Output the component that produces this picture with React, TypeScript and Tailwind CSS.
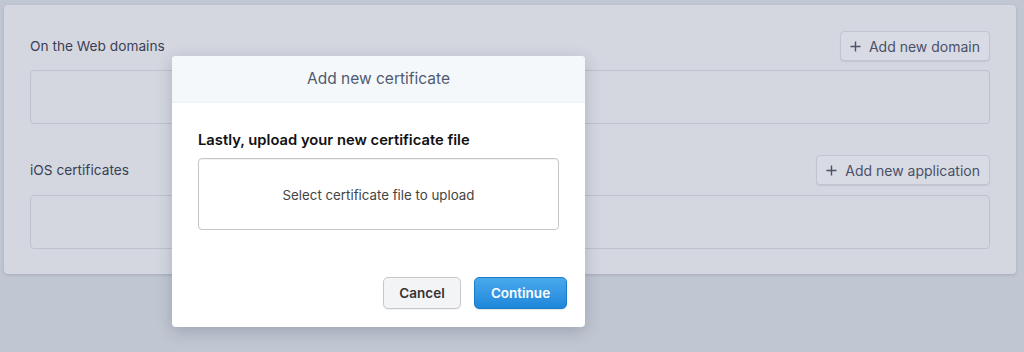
import React from "react";

function Plus() {
  return (
    <svg width="11" height="11" viewBox="0 0 11 11" className="shrink-0">
      <path d="M5.5 0.5v10M0.5 5.5h10" stroke="currentColor" strokeWidth="1.4" fill="none" />
    </svg>
  );
}

export default function App() {
  return (
    <div
      className="relative w-[1024px] h-[352px] bg-[#c0c6d2] overflow-hidden"
      style={{ fontFamily: "Inter, 'Noto Sans', sans-serif" }}
    >
      <div className="pt-[5px] pl-[4px] pr-[8px]">
        <div className="h-[269px] rounded-[4px] bg-[#d4d7e0] shadow-[0_1px_3px_rgba(40,50,70,0.18)] px-[26px] pt-[26px]">
          <div className="flex items-center justify-between h-[30px]">
            <span className="text-[13.7px] text-[#3a4054]">On the Web domains</span>
            <button className="flex items-center gap-[8px] h-[30px] px-[9px] rounded-[4px] border border-[#c1c5cf] bg-[#d8dbe3] text-[14px] text-[#4a5068] shadow-[0_1px_1px_rgba(0,0,0,0.08)]">
              <Plus />
              Add new domain
            </button>
          </div>
          <div className="mt-[9px] h-[54px] rounded-[4px] border border-[#bec2cc]" />
          <div className="mt-[31px] flex items-center justify-between h-[30px]">
            <span className="text-[13.7px] text-[#3a4054]">iOS certificates</span>
            <button className="flex items-center gap-[8px] h-[30px] px-[9px] rounded-[4px] border border-[#c1c5cf] bg-[#d8dbe3] text-[14px] text-[#4a5068] shadow-[0_1px_1px_rgba(0,0,0,0.08)]">
              <Plus />
              Add new application
            </button>
          </div>
          <div className="mt-[10px] h-[54px] rounded-[4px] border border-[#bec2cc]" />
        </div>
      </div>

      <div className="absolute left-[172px] top-[56px] w-[413px] h-[271px] rounded-[4px] bg-white overflow-hidden shadow-[0_4px_16px_rgba(30,40,60,0.22)] flex flex-col">
        <div className="h-[47px] bg-[#f5f8fb] border-b border-[#eef1f5] flex items-center justify-center text-[15.5px] text-[#4f5a70]">
          Add new certificate
        </div>
        <div className="px-[26px] pt-[26px] flex-1">
          <div className="text-[14.75px] font-semibold text-[#111]">Lastly, upload your new certificate file</div>
          <div className="mt-[7px] w-[361px] h-[72px] pt-[3px] rounded-[4px] border border-[#c5c5c5] shadow-[inset_0_1px_1px_rgba(0,0,0,0.05)] flex items-center justify-center text-[13.3px] text-[#444]">
            Select certificate file to upload
          </div>
        </div>
        <div className="flex justify-end gap-[13px] pr-[18px] pb-[18px]">
          <button className="w-[78px] h-[32px] rounded-[5px] border border-[#c6c8cc] bg-[#f3f4f6] text-[13.5px] font-semibold text-[#333] shadow-[0_1px_1px_rgba(0,0,0,0.06)]">
            Cancel
          </button>
          <button className="w-[93px] h-[32px] rounded-[5px] border border-[#1a7ccc] bg-gradient-to-b from-[#48a9ec] to-[#1d87da] text-[13.5px] font-semibold text-white shadow-[0_1px_1px_rgba(0,0,0,0.1)]">
            Continue
          </button>
        </div>
      </div>
    </div>
  );
}
